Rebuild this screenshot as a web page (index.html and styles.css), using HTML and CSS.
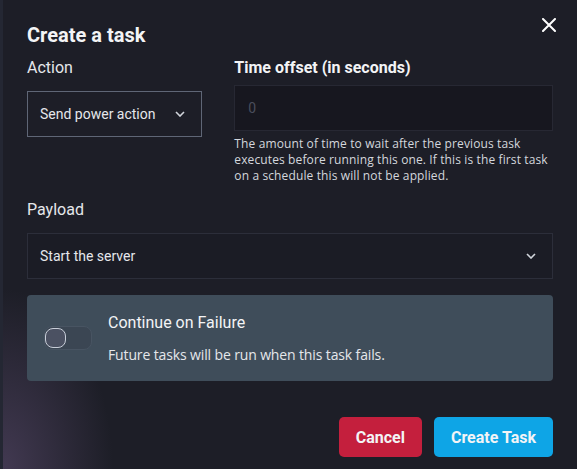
FILE: index.html
```html
<!DOCTYPE html>
<html lang="en">
<head>
<meta charset="utf-8">
<title>Create a task</title>
<link rel="stylesheet" href="styles.css">
</head>
<body>
<div class="screen">
  <div class="edge"></div>
  <div class="modal">
    <button class="close" aria-label="Close">
      <svg width="14" height="14" viewBox="0 0 14 14"><path d="M1 1 L13 13 M13 1 L1 13" stroke="#ffffff" stroke-width="2" stroke-linecap="round" fill="none"/></svg>
    </button>
    <h2 class="title">Create a task</h2>
    <div class="row">
      <div class="col-left">
        <div class="label">Action</div>
        <div class="select select-action">
          <span>Send power action</span>
          <svg class="chev" width="10" height="6" viewBox="0 0 10 6"><polyline points="1,1 5,5 9,1" fill="none" stroke="#d1d5db" stroke-width="1.6"/></svg>
        </div>
      </div>
      <div class="col-right">
        <div class="label label-bold">Time offset (in seconds)</div>
        <div class="input"><span class="placeholder">0</span></div>
        <p class="help">The amount of time to wait after the previous task executes before running this one. If this is the first task on a schedule this will not be applied.</p>
      </div>
    </div>
    <div class="label label-payload">Payload</div>
    <div class="select select-payload">
      <span>Start the server</span>
      <svg class="chev" width="10" height="6" viewBox="0 0 10 6"><polyline points="1,1 5,5 9,1" fill="none" stroke="#d1d5db" stroke-width="1.6"/></svg>
    </div>
    <div class="card">
      <div class="toggle"><div class="knob"></div></div>
      <div class="card-text">
        <div class="card-title">Continue on Failure</div>
        <div class="card-desc">Future tasks will be run when this task fails.</div>
      </div>
    </div>
    <div class="actions">
      <button class="btn btn-cancel">Cancel</button>
      <button class="btn btn-create">Create Task</button>
    </div>
  </div>
</div>
</body>
</html>
```

FILE: styles.css
```css
* { box-sizing: border-box; }
html, body { margin: 0; padding: 0; }
body {
  width: 577px;
  height: 469px;
  overflow: hidden;
  background: #1d1e27;
  font-family: Roboto, "Liberation Sans", sans-serif;
  color: #e5e7eb;
}
.screen {
  display: flex;
  height: 469px;
}
.edge {
  width: 3px;
  flex: none;
  background: #242733;
}
.modal {
  flex: 1;
  position: relative;
  padding: 21px 24px 12px 24px;
  background:
    radial-gradient(ellipse 110px 180px at 0 100%, rgba(70, 60, 86, 0.9), rgba(70, 60, 86, 0) 100%),
    #1d1e27;
}
.close {
  position: absolute;
  top: 18px;
  right: 21px;
  background: none;
  border: 0;
  padding: 0;
  width: 14px;
  height: 14px;
  display: block;
}
.close svg { display: block; }
.title {
  margin: 0;
  font-family: Roboto, sans-serif;
  font-weight: 700;
  font-size: 20px;
  line-height: 28px;
  color: #f3f4f6;
}
.row {
  display: flex;
  gap: 32px;
  margin-top: 7px;
}
.col-left { width: 33.333%; flex: none; }
.col-right { flex: 1; }
.label {
  font-size: 16px;
  line-height: 24px;
  color: #e5e7eb;
}
.label-bold { font-weight: 700; color: #f3f4f6; }
.select {
  display: flex;
  align-items: center;
  justify-content: space-between;
  height: 46px;
  padding: 0 16px 0 12px;
  font-size: 14px;
  color: #e5e7eb;
}
.select-action {
  margin-top: 11px;
  border: 1px solid #5f6676;
}
.select-payload {
  margin-top: 11px;
  border: 1px solid #2c2e3a;
  background: #1b1c25;
}
.chev { display: block; }
.input {
  margin-top: 5px;
  height: 46px;
  border: 1px solid #272833;
  background: #17171f;
  padding: 0 13px;
  display: flex;
  align-items: center;
  font-size: 14px;
}
.placeholder { color: #4a4e5c; }
.help {
  margin: 5px 0 0 0;
  font-family: "Open Sans", sans-serif;
  font-size: 12px;
  line-height: 16px;
  letter-spacing: 0.12px;
  color: #d4d7dd;
}
.label-payload { margin-top: 14px; }
.card {
  margin-top: 16px;
  background: #3f4d5a;
  border-radius: 4px;
  padding: 16px 17px;
  display: flex;
  align-items: center;
  gap: 16px;
}
.toggle {
  width: 48px;
  height: 24px;
  flex: none;
  border-radius: 8px;
  background: #3b4653;
  border: 1px solid #485462;
  position: relative;
}
.knob {
  position: absolute;
  left: 0;
  top: 1px;
  width: 21px;
  height: 20px;
  border-radius: 8px;
  background: #4b5162;
  border: 1.5px solid #c8ced8;
}
.card-title {
  font-size: 16px;
  line-height: 24px;
  color: #f3f4f6;
}
.card-desc {
  margin-top: 10px;
  font-family: "Open Sans", sans-serif;
  font-size: 14px;
  line-height: 20px;
  letter-spacing: -0.13px;
  color: #e5e7eb;
}
.actions {
  display: flex;
  justify-content: flex-end;
  gap: 12px;
  margin-top: 36px;
}
.btn {
  height: 40px;
  border: 0;
  border-radius: 5px;
  padding: 0 17px;
  font-family: Roboto, sans-serif;
  font-weight: 700;
  font-size: 16px;
  color: #f3f4f6;
}
.btn-cancel { background: #c41f3d; }
.btn-create { background: #0ea5e6; }
```
